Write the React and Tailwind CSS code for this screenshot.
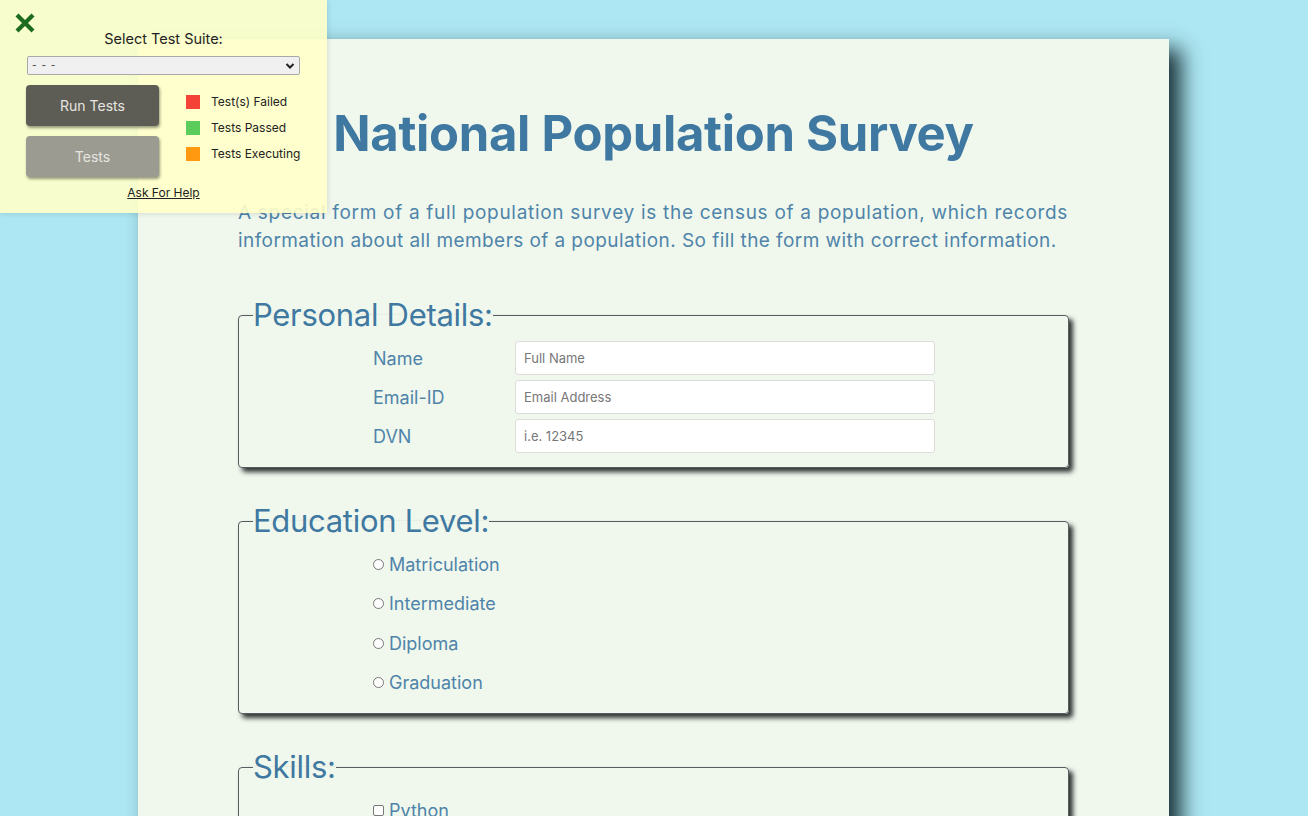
import React from 'react';

const FIELDS = [
  { label: 'Name', placeholder: 'Full Name' },
  { label: 'Email-ID', placeholder: 'Email Address' },
  { label: 'DVN', placeholder: 'i.e. 12345' },
];

const LEVELS = ['Matriculation', 'Intermediate', 'Diploma', 'Graduation'];

const SKILLS = ['Python', 'JavaScript', 'C++'];

const Section = ({ title, children, className = '' }) => (
  <fieldset className={`border border-[#555d60] rounded-[4px] pl-[14px] shadow-[4px_4px_5px_rgba(25,30,30,0.9)] ${className}`}>
    <legend className="text-[31px] leading-[38px] text-[#3f78a0] tracking-[-0.3px]">{title}</legend>
    {children}
  </fieldset>
);

const TestPanel = () => (
  <div className="absolute left-0 top-0 w-[327px] h-[213px] bg-[#ffffc8]/90 shadow-[0_0_6px_rgba(0,0,0,0.15)] font-['Inter',sans-serif]">
    <svg className="absolute left-[14px] top-[13px]" width="22" height="20" viewBox="0 0 22 20">
      <path d="M3 2 L19 18 M19 2 L3 18" stroke="#1d6b1f" strokeWidth="4.2" strokeLinecap="butt" />
    </svg>
    <div className="pt-[30px] text-center text-[14.5px] leading-[17px] text-[#222]">Select Test Suite:</div>
    <div className="mx-[27px] mt-[9px] h-[19px] border border-[#a9a9a9] rounded-[2px] bg-[#f0f0f0] flex items-center justify-between px-[4px]">
      <span className="text-[10px] text-[#333] tracking-[1px]">- - -</span>
      <svg width="10" height="8" viewBox="0 0 10 8">
        <path d="M1.5 2 L5 5.5 L8.5 2" stroke="#222" strokeWidth="2" fill="none" />
      </svg>
    </div>
    <div className="flex mt-[10px] ml-[26px]">
      <div className="flex flex-col gap-[10px]">
        <div className="w-[133px] h-[41px] rounded-[4px] bg-[#5e5d55] shadow-[1px_2px_3px_rgba(0,0,0,0.4)] flex items-center justify-center text-[14px] text-[#e6e6e0]">Run Tests</div>
        <div className="w-[133px] h-[41px] rounded-[4px] bg-[#9c9b92] shadow-[1px_2px_3px_rgba(0,0,0,0.4)] flex items-center justify-center text-[14px] text-[#e6e6e0]">Tests</div>
      </div>
      <div className="ml-[27px] mt-[10px] flex flex-col gap-[12px] text-[12px] leading-[14px] text-[#222]">
        <div className="flex items-center gap-[11px]"><span className="w-[14px] h-[14px] bg-[#f44336]" />Test(s) Failed</div>
        <div className="flex items-center gap-[11px]"><span className="w-[14px] h-[14px] bg-[#5ccd5c]" />Tests Passed</div>
        <div className="flex items-center gap-[11px]"><span className="w-[14px] h-[14px] bg-[#ff9a10]" />Tests Executing</div>
      </div>
    </div>
    <div className="mt-[9px] text-center text-[12px] leading-[14px] text-[#222] underline">Ask For Help</div>
  </div>
);

export default function App() {
  return (
    <div className="relative min-h-[816px] bg-[#ade7f3] font-['Inter',sans-serif] pt-[39px] pb-[40px] overflow-hidden">
      <main className="ml-[138px] w-[1031px] bg-[#f0f8ee] shadow-[12px_10px_20px_rgba(10,30,35,0.9)] px-[100px] pt-[66px] pb-[60px]">
        <h1 className="text-center text-[49px] leading-[58px] font-bold text-[#3f78a0] tracking-[-0.3px]">National Population Survey</h1>
        <p className="mt-[36px] -mr-[40px] whitespace-nowrap text-[19px] leading-[28px] text-[#4f84a9]">
          <span className="tracking-[0.7px]">A special form of a full population survey is the census of a population, which records</span>
          <br />
          <span className="tracking-[0.43px]">information about all members of a population. So fill the form with correct information.</span>
        </p>

        <form className="mt-[41px] flex flex-col gap-[34px]">
          <Section title="Personal Details:">
            <div className="pl-[120px] pt-[7px] pb-[14px] flex flex-col gap-[5px]">
              {FIELDS.map((f) => (
                <div key={f.label} className="flex items-center">
                  <label className="w-[142px] text-[18px] text-[#4f84a9]">{f.label}</label>
                  <input
                    type="text"
                    placeholder={f.placeholder}
                    className="w-[420px] h-[34px] bg-white border border-[#dcdcdc] rounded-[3px] px-[8px] text-[13px] placeholder:text-[#777] outline-none"
                  />
                </div>
              ))}
            </div>
          </Section>

          <Section title="Education Level:">
            <div className="pl-[120px] pt-[5px] pb-[11px] flex flex-col">
              {LEVELS.map((l) => (
                <label key={l} className="h-[39.3px] flex items-center text-[18px] text-[#4f84a9]">
                  <span className="w-[11px] h-[11px] rounded-full border border-[#777] bg-white mr-[5px]" />
                  {l}
                </label>
              ))}
            </div>
          </Section>

          <Section title="Skills:">
            <div className="pl-[120px] pt-[5px] pb-[11px] flex flex-col">
              {SKILLS.map((s) => (
                <label key={s} className="h-[39.3px] flex items-center text-[18px] text-[#4f84a9]">
                  <span className="w-[11px] h-[11px] rounded-[2px] border border-[#777] bg-white mr-[5px]" />
                  {s}
                </label>
              ))}
            </div>
          </Section>
        </form>
      </main>
      <TestPanel />
    </div>
  );
}
